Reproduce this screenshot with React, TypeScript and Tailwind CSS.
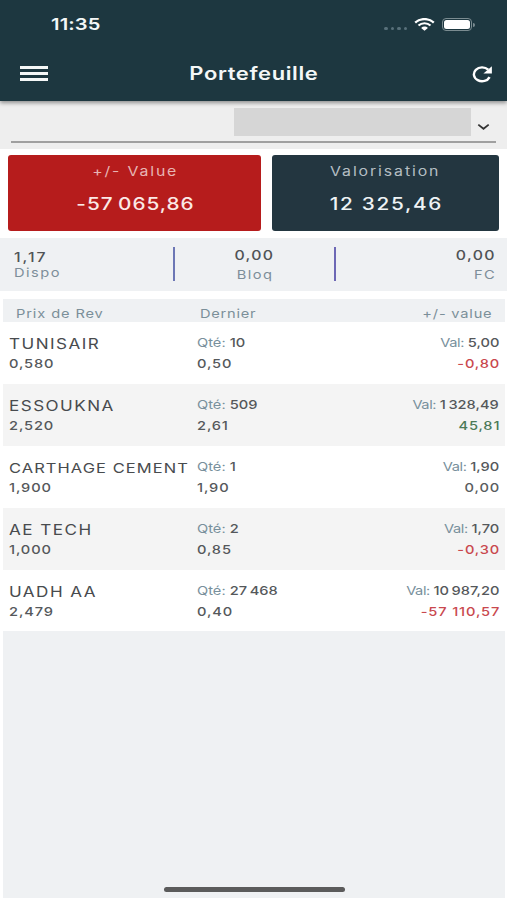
import { clsx } from "clsx";

type Tone = "neutral" | "loss" | "gain";

type Holding = {
  name: string;
  cost: string;
  qty: string;
  last: string;
  val: string;
  diff: string;
  tone: Tone;
};

const holdings: Holding[] = [
  { name: "TUNISAIR", cost: "0,580", qty: "10", last: "0,50", val: "5,00", diff: "-0,80", tone: "loss" },
  { name: "ESSOUKNA", cost: "2,520", qty: "509", last: "2,61", val: "1\u2009328,49", diff: "45,81", tone: "gain" },
  { name: "CARTHAGE CEMENT", cost: "1,900", qty: "1", last: "1,90", val: "1,90", diff: "0,00", tone: "neutral" },
  { name: "AE TECH", cost: "1,000", qty: "2", last: "0,85", val: "1,70", diff: "-0,30", tone: "loss" },
  { name: "UADH AA", cost: "2,479", qty: "27\u2009468", last: "0,40", val: "10\u2009987,20", diff: "-57 110,57", tone: "loss" },
];

const toneClass: Record<Tone, string> = {
  neutral: "text-[#5a5d60]",
  loss: "text-[#c9484e]",
  gain: "text-[#4b7a58]",
};

const alignClass = {
  left: "origin-left self-start",
  center: "origin-center self-center",
  right: "origin-right self-end",
};

/* Wide-set text line, stretched from the side it is anchored to. */
function Line({
  children,
  align = "left",
  className,
}: {
  children: React.ReactNode;
  align?: keyof typeof alignClass;
  className?: string;
}) {
  return (
    <div className={clsx("scale-x-[1.22] whitespace-nowrap", alignClass[align], className)}>
      {children}
    </div>
  );
}

function StatusBar() {
  return (
    <div className="flex h-[49px] items-center pr-[32px] pl-[51px] text-[#f4f7f7]">
      <Line className="text-[16.5px] leading-[49px] font-semibold tracking-[0.1px]">11:35</Line>
      <div className="mt-[7px] ml-auto flex gap-[3px]">
        <i className="h-[3px] w-[4px] rounded-full bg-[#58707a]" />
        <i className="h-[3px] w-[3px] rounded-full bg-[#58707a]" />
        <i className="h-[3px] w-[4px] rounded-full bg-[#58707a]" />
        <i className="h-[3px] w-[3px] rounded-full bg-[#58707a]" />
      </div>
      <svg className="ml-[7px]" width="21" height="13" viewBox="0 0 21 13" fill="none">
        <path d="M1.2 4.6C6.2-.1 14.8-.1 19.8 4.6" stroke="#fff" strokeWidth="2.3" />
        <path d="M4.5 7.6C7.8 4.5 13.2 4.5 16.5 7.6" stroke="#fff" strokeWidth="2.1" />
        <path d="M7.1 9.9C9.1 8 11.9 8 13.9 9.9L10.5 12.8Z" fill="#fff" />
      </svg>
      <div className="ml-[7px] flex items-center">
        <div className="h-[13px] w-[30px] rounded-[4px] border border-[#7b8c91] p-px">
          <div className="h-full rounded-[2.5px] bg-white" />
        </div>
        <div className="ml-px h-[4px] w-[2px] rounded-r-full bg-[#7b8c91]" />
      </div>
    </div>
  );
}

function TitleBar() {
  return (
    <div className="grid h-[52px] grid-cols-[1fr_auto_1fr] items-center pr-[15px] pl-[20px]">
      <div className="mb-[3px] flex w-[28px] flex-col gap-[3px]">
        <span className="h-[3px] bg-[#f4f7f7]" />
        <span className="h-[3px] bg-[#f4f7f7]" />
        <span className="h-[3px] bg-[#f4f7f7]" />
      </div>
      <Line align="center" className="mb-[3px] -ml-[5px] text-[18px] leading-[49px] font-semibold tracking-[0.5px] text-[#f4f7f7]">
        Portefeuille
      </Line>
      <svg className="mb-[2px] justify-self-end" width="20" height="17" viewBox="0 0 20 17" fill="none">
        <path d="M17.6 11.1A8.2 6.9 0 1 1 16.2 3.7" stroke="#fff" strokeWidth="2.4" />
        <path d="M19.9 0.3V7.5H11.4Z" fill="#fff" />
      </svg>
    </div>
  );
}

function SummaryCard({ label, value, className, labelClass, valueClass }: { label: string; value: string; className: string; labelClass: string; valueClass: string }) {
  return (
    <div className={clsx("flex h-[76px] flex-col rounded-[3px]", className)}>
      <Line align="center" className={clsx("mt-[6px] text-[13px] leading-[20px]", labelClass)}>
        {label}
      </Line>
      <Line align="center" className={clsx("mt-[11px] text-[17px] leading-[25px] font-medium", valueClass)}>
        {value}
      </Line>
    </div>
  );
}

function HoldingRow({ item, shaded }: { item: Holding; shaded: boolean }) {
  return (
    <div className={clsx("flex h-[61.9px] pr-[6px] pl-[6px] text-[12px] text-[#55585b]", shaded ? "bg-[#f4f4f4]" : "bg-white")}>
      <div className="flex w-[188px] flex-col pt-[12px]">
        <Line
          className={clsx(
            "leading-[20px] text-[#484b4e]",
            item.name.length > 12 ? "text-[13.5px] tracking-[0.87px]" : "text-[14px] tracking-[1.2px]",
          )}
        >
          {item.name}
        </Line>
        <Line className="leading-[20px] font-medium tracking-[0.7px]">{item.cost}</Line>
      </div>
      <div className="flex flex-1 flex-col pt-[10px]">
        <Line className="leading-[21px]">
          <span className="text-[#78909c]">Qté: </span>
          <span className="font-medium">{item.qty}</span>
        </Line>
        <Line className="leading-[22px] font-medium tracking-[0.7px]">{item.last}</Line>
      </div>
      <div className="flex flex-col pt-[10px]">
        <Line align="right" className="leading-[21px]">
          <span className="tracking-[-0.35px] text-[#78909c]">Val: </span>
          <span className="font-medium">{item.val}</span>
        </Line>
        <Line align="right" className={clsx("-mr-[1px] leading-[22px] font-medium tracking-[0.7px]", toneClass[item.tone])}>
          {item.diff}
        </Line>
      </div>
    </div>
  );
}

export default function App() {
  return (
    <div className="flex h-[900px] w-[507px] flex-col overflow-hidden bg-white font-['Inter','Liberation_Sans',sans-serif]">
      <header className="relative z-10 h-[101px] shrink-0 bg-[#1d3740] shadow-[0_2px_4px_rgba(0,0,0,0.4)]">
        <StatusBar />
        <TitleBar />
      </header>

      <div className="h-[48px] shrink-0 bg-[#eeeeee] px-[11px] pt-[7px]">
        <div className="flex h-[35px] justify-end border-b-2 border-[#a0a0a0]">
          <div className="h-[28px] w-[237px] bg-[#d6d6d6]" />
          <svg className="mt-[15px] mr-[6px] ml-[6px]" width="13" height="8" viewBox="0 0 13 8" fill="none">
            <path d="M1.3 1.6L6.5 5.8L11.7 1.6" stroke="#333" strokeWidth="1.8" />
          </svg>
        </div>
      </div>

      <div className="flex shrink-0 gap-[11px] px-[8px] pt-[6px] pb-[7px]">
        <SummaryCard label="+/- Value" value={"-57\u2009065,86"} className="w-[253px] bg-[#b61c1c]" labelClass="ml-[2px] tracking-[1.5px] text-[#e7b5b3]" valueClass="ml-[2px] tracking-[0.8px] text-[#fbe9e6]" />
        <SummaryCard label="Valorisation" value="12 325,46" className="flex-1 bg-[#233640]" labelClass="tracking-[1.55px] text-[#b4bec3]" valueClass="ml-[2px] tracking-[1.4px] text-[#eef3f5]" />
      </div>

      <div className="grid h-[53px] shrink-0 grid-cols-[174px_161px_1fr] bg-[#eff1f3] pr-[11px] text-[13px] font-medium text-[#505356]">
        <div className="flex flex-col pt-[11px] pl-[14px]">
          <Line className="leading-[16px] tracking-[1.6px]">1,17</Line>
          <Line className="text-[12px] leading-[15px] font-normal tracking-[1.2px] text-[#7d8e99]">Dispo</Line>
        </div>
        <div className="flex flex-col pt-[8px]">
          <Line align="center" className="leading-[19px] tracking-[1.1px]">0,00</Line>
          <Line align="center" className="ml-[1px] text-[12px] leading-[19px] font-normal tracking-[1.2px] text-[#7d8e99]">Bloq</Line>
        </div>
        <div className="flex flex-col pt-[8px]">
          <Line align="right" className="leading-[19px] tracking-[1.1px]">0,00</Line>
          <Line align="right" className="text-[12px] leading-[19px] font-normal tracking-[1.2px] text-[#7d8e99]">FC</Line>
        </div>
        <div className="col-span-3 -mt-[41px] flex h-[34px]">
          <span className="ml-[173px] w-[2px] bg-[#6d77b5]" />
          <span className="ml-[159px] w-[2px] bg-[#6d68b5]" />
        </div>
      </div>

      <main className="mt-[8px] mr-[2px] ml-[3px] flex min-h-0 flex-1 flex-col bg-[#eff1f3]">
        <div className="flex h-[23px] shrink-0 items-center pt-[6px] pr-[13px] pl-[13px] text-[12px] leading-[18px] text-[#7b8f99]">
          <div className="flex w-[184px] flex-col">
            <Line className="tracking-[0.72px]">Prix de Rev</Line>
          </div>
          <Line className="tracking-[0.6px]">Dernier</Line>
          <Line align="right" className="ml-auto self-center! tracking-[0.65px]">+/- value</Line>
        </div>
        <div className="shrink-0">
          {holdings.map((item, index) => (
            <HoldingRow key={item.name} item={item} shaded={index % 2 === 1} />
          ))}
        </div>
        <div className="mt-auto mb-[6px] h-[5px] w-[181px] self-center rounded-full bg-[#5b5b5b]" />
      </main>
      <div className="h-[2px] shrink-0 bg-white" />
    </div>
  );
}
